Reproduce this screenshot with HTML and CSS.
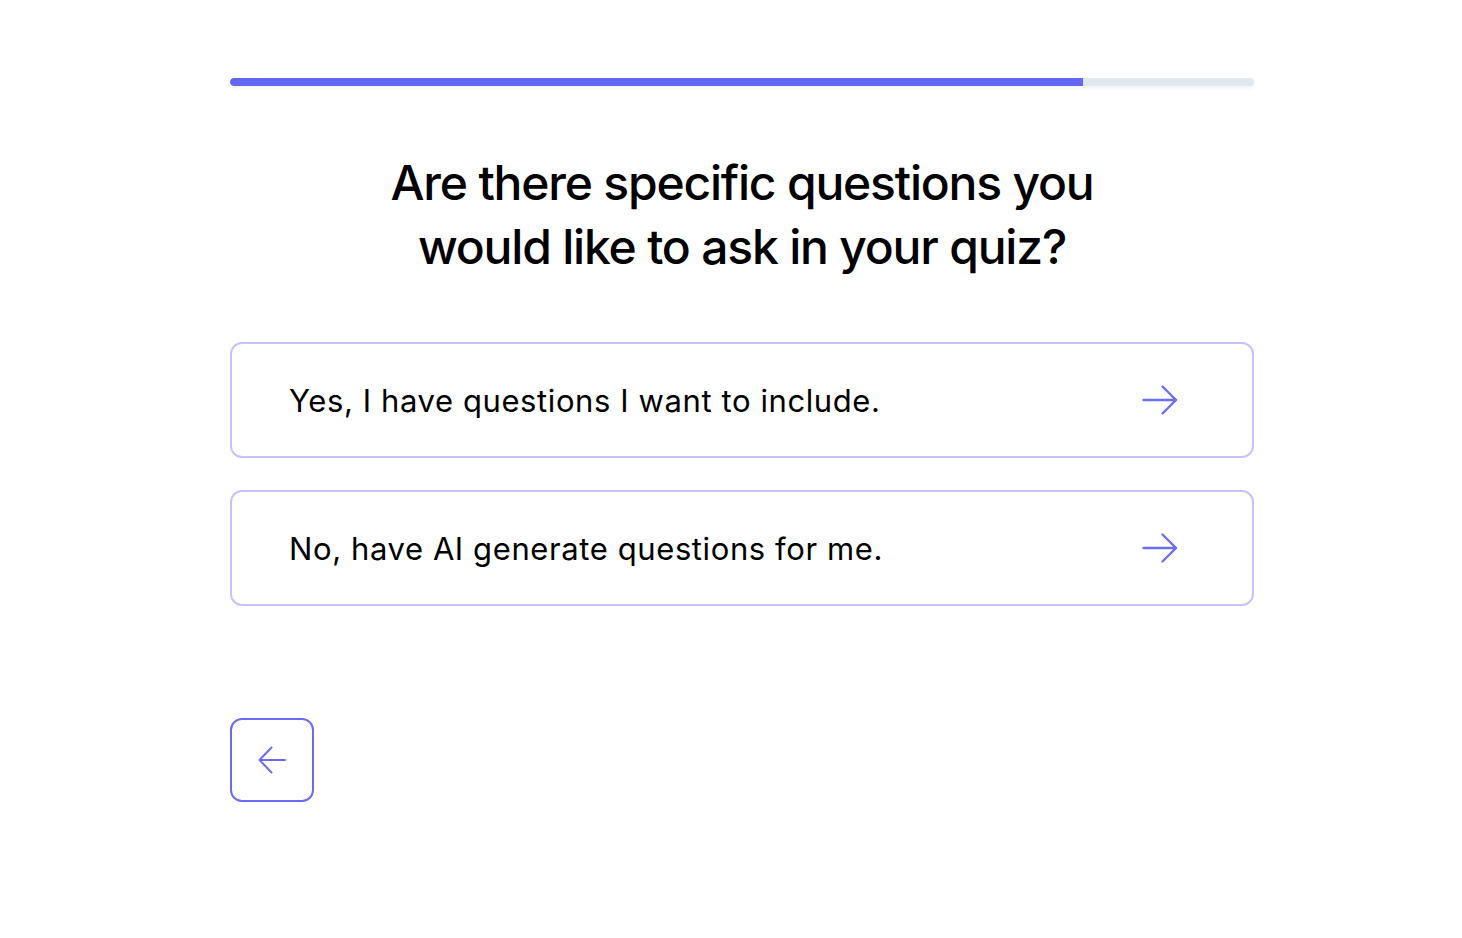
FILE: index.html
```html
<!DOCTYPE html>
<html>
<head>
<meta charset="utf-8">
<link rel="stylesheet" href="styles.css">
</head>
<body>
<main class="quiz">
  <div class="progress"><div class="progress-fill" style="width:83.3%"></div></div>
  <h1 class="title">Are there specific questions you<br>would like to ask in your quiz?</h1>
  <div class="options">
    <button class="option">
      <span class="option-text">Yes, I have questions I want to include.</span>
      <svg class="arrow" width="36" height="36" viewBox="0 0 36 36" fill="none" stroke="currentColor" stroke-width="2.4" stroke-linecap="round" stroke-linejoin="round"><path d="M1.5 18H34M20.5 4.5L34 18L20.5 31.5"/></svg>
    </button>
    <button class="option">
      <span class="option-text">No, have AI generate questions for me.</span>
      <svg class="arrow" width="36" height="36" viewBox="0 0 36 36" fill="none" stroke="currentColor" stroke-width="2.4" stroke-linecap="round" stroke-linejoin="round"><path d="M1.5 18H34M20.5 4.5L34 18L20.5 31.5"/></svg>
    </button>
  </div>
  <button class="back">
    <svg width="28" height="28" viewBox="0 0 28 28" fill="none" stroke="currentColor" stroke-width="2" stroke-linecap="round" stroke-linejoin="round"><path d="M27 14H1.5M13.5 1.5L1.5 14L13.5 26.5"/></svg>
  </button>
</main>
</body>
</html>
```
FILE: styles.css
```css
html, body {
  margin: 0;
  padding: 0;
  background: #ffffff;
}
body {
  font-family: Inter, "Noto Sans", sans-serif;
  color: #000;
}
.quiz {
  width: 1024px;
  margin-left: 230px;
  padding-top: 78px;
  display: flex;
  flex-direction: column;
}
.progress {
  height: 8px;
  background: #e2e8f0;
  border-radius: 4px;
  box-shadow: 0 2px 4px rgba(0,0,0,0.05);
  overflow: hidden;
}
.progress-fill {
  height: 100%;
  background: #6366f1;
  border-radius: 4px 0 0 4px;
}
.title {
  margin: 65px 0 0;
  text-align: center;
  font-size: 48px;
  line-height: 64px;
  font-weight: 500;
  letter-spacing: -1.2px;
}
.options {
  margin-top: 63px;
  display: flex;
  flex-direction: column;
  gap: 32px;
}
.option {
  display: flex;
  align-items: center;
  justify-content: space-between;
  height: 116px;
  box-sizing: border-box;
  padding: 0 74px 0 57px;
  border: 2px solid #c7c2fb;
  border-radius: 12px;
  background: #fff;
  font-family: inherit;
  cursor: pointer;
  text-align: left;
}
.option-text {
  font-size: 31px;
  font-weight: 400;
  color: #000;
  letter-spacing: 0.6px;
}
.arrow {
  color: #6b6ef3;
  display: block;
}
.back {
  margin-top: 112px;
  width: 84px;
  height: 84px;
  box-sizing: border-box;
  border: 2px solid #6b6cf3;
  border-radius: 12px;
  background: #fff;
  color: #6b6cf3;
  display: flex;
  align-items: center;
  justify-content: center;
  padding: 0;
  cursor: pointer;
}
.back svg { display: block; }
```
